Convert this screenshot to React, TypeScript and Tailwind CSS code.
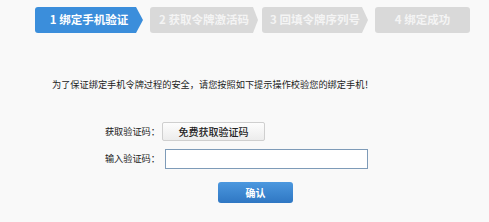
import React from 'react';

const cjk = { fontFamily: '"Noto Sans CJK SC", "Noto Sans", sans-serif' };

type Step = { no: number; label: string; width: number; arrow: number; gap: number };

const steps: Step[] = [
  { no: 1, label: '绑定手机验证', width: 101, arrow: 7, gap: 7 },
  { no: 2, label: '获取令牌激活码', width: 103, arrow: 5, gap: 4 },
  { no: 3, label: '回填令牌序列号', width: 100, arrow: 6, gap: 7 },
  { no: 4, label: '绑定成功', width: 95, arrow: 0, gap: 0 },
];

function StepItem({ step, active }: { step: Step; active: boolean }) {
  const color = active ? '#3b8edb' : '#d9d9d9';
  return (
    <div className="relative flex h-[26px] shrink-0" style={{ marginRight: step.gap }}>
      <div
        className={step.arrow ? 'h-full rounded-l-[3px]' : 'h-full rounded-[3px]'}
        style={{ width: step.width, backgroundColor: color }}
      />
      {step.arrow > 0 && (
        <svg width={step.arrow} height="26" viewBox={`0 0 ${step.arrow} 26`} className="block">
          <polygon points={`0,0 ${step.arrow},13 0,26`} fill={color} />
        </svg>
      )}
      <span
        className={`absolute inset-0 flex items-center justify-center whitespace-nowrap text-[11.5px] font-bold ${
          active ? 'text-white' : 'text-[#f4f4f4]'
        }`}
      >
        {step.no} {step.label}
      </span>
    </div>
  );
}

export default function App() {
  return (
    <div className="h-[222px] w-[489px] overflow-hidden bg-[#f9f9f9] text-[#333]" style={cjk}>
      <div className="flex pl-[35px] pt-[7px]">
        {steps.map((s) => (
          <StepItem key={s.no} step={s} active={s.no === 1} />
        ))}
      </div>

      <p className="ml-[52px] mt-[45px] text-[9.2px] leading-[12px] text-[#222]">
        为了保证绑定手机令牌过程的安全，请您按照如下提示操作校验您的绑定手机！
      </p>

      <div className="mt-[32px] flex items-center">
        <span className="w-[162px] pr-[2px] text-right text-[9.2px] text-[#222]">获取验证码：</span>
        <button className="h-[19px] w-[103px] rounded-[2px] border border-[#cfcfcf] bg-gradient-to-b from-[#fdfdfd] to-[#ececec] text-[10px] font-medium text-[#222]">
          免费获取验证码
        </button>
      </div>

      <div className="mt-[8px] flex items-center">
        <span className="w-[165px] pr-[5px] text-right text-[9.2px] text-[#222]">输入验证码：</span>
        <input className="h-[20px] w-[203px] border border-[#7e9bb8] bg-white px-1 text-[10px] outline-none" />
      </div>

      <button className="ml-[218px] mt-[13px] h-[21px] w-[75px] rounded-[3px] bg-gradient-to-b from-[#4c98df] to-[#2f77c3] text-[10px] font-bold text-white">
        确认
      </button>
    </div>
  );
}
